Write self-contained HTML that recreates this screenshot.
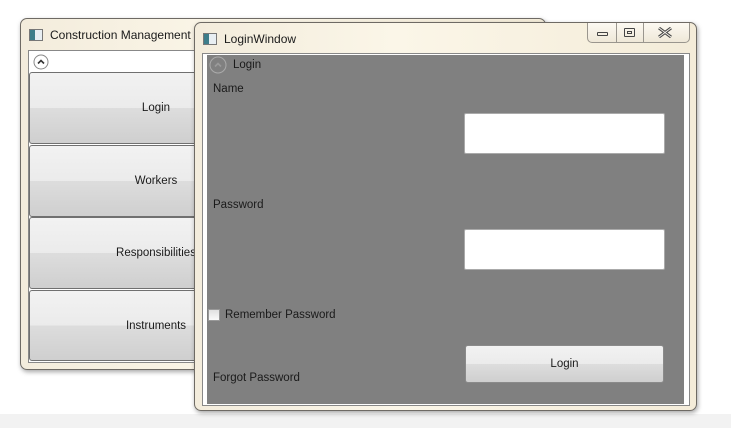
<!DOCTYPE html>
<html><head><style>
*{margin:0;padding:0;box-sizing:border-box}
body{width:731px;height:428px;overflow:hidden;background:#fff;position:relative;font-family:"Liberation Sans",sans-serif;font-size:11.5px;color:#1a1a1a}
.abs{position:absolute}
.win{position:absolute;border:1px solid #6e6a64;border-radius:7px;background:linear-gradient(90deg,#f3ecdc,#fbf6e8 40%,#f4ecd9);box-shadow:1px 2px 5px rgba(0,0,0,.35)}
.btn{position:absolute;border:1px solid #707070;border-radius:3px;background:linear-gradient(#f2f2f2 0,#ebebeb 50%,#dddddd 50%,#cfcfcf 100%);text-align:center}
.icon{position:absolute;width:14px;height:12px;border:1px solid #777;background:linear-gradient(90deg,#3d7d8a 0 5px,#e8eef2 5px)}
.txt{position:absolute;white-space:nowrap}
</style></head><body>
<div class="abs" style="left:0;top:414px;width:731px;height:14px;background:#f2f2f2"></div>

<!-- back window -->
<div class="win" style="left:20px;top:18px;width:526px;height:352px">
  <div class="icon" style="left:8px;top:10px"></div>
  <div class="txt" style="left:29px;top:9px;font-size:12px">Construction Management</div>
  <div class="abs" style="left:7px;top:31px;width:510px;height:313px;background:#fff;border:1px solid #888"></div>
  <svg class="abs" style="left:12px;top:35px" width="16" height="16"><circle cx="8" cy="8" r="7" fill="#fff" stroke="#888"/><path d="M5 9.5 L8 6.5 L11 9.5" fill="none" stroke="#333" stroke-width="1.6"/></svg>
  <div class="btn" style="left:8px;top:53px;width:254px;height:72px;line-height:70px">Login</div>
  <div class="btn" style="left:8px;top:126px;width:254px;height:72px;line-height:70px">Workers</div>
  <div class="btn" style="left:8px;top:198px;width:254px;height:72px;line-height:70px">Responsibilities</div>
  <div class="btn" style="left:8px;top:271px;width:254px;height:71px;line-height:70px">Instruments</div>
</div>

<!-- front window -->
<div class="win" style="left:194px;top:22px;width:503px;height:389px">
  <div class="icon" style="left:8px;top:10px"></div>
  <div class="txt" style="left:29px;top:9px;font-size:12px">LoginWindow</div>
  <div class="abs" style="left:392px;top:0;width:103px;height:20px;border:1px solid #9a968e;border-top:none;border-radius:0 0 5px 5px;background:linear-gradient(#fcf9f2,#efe8d8)">
    <div class="abs" style="left:28px;top:0;width:1px;height:19px;background:#9a968e"></div>
    <div class="abs" style="left:55px;top:0;width:1px;height:19px;background:#9a968e"></div>
    <div class="abs" style="left:9px;top:9px;width:11px;height:4px;border:1px solid #444;border-radius:1px"></div>
    <div class="abs" style="left:36px;top:5px;width:11px;height:9px;border:1px solid #444;border-radius:1px"><div class="abs" style="left:2px;top:2px;width:5px;height:3px;border:1px solid #444"></div></div>
    <svg class="abs" style="left:70px;top:4px" width="14" height="11"><path d="M1 1 L13 10 M13 1 L1 10" stroke="#444" stroke-width="3"/><path d="M1 1 L13 10 M13 1 L1 10" stroke="#f2efe8" stroke-width="1"/></svg>
  </div>
  <div class="abs" style="left:7px;top:30px;width:488px;height:353px;background:#fff;border:1px solid #888"></div>
  <div class="abs" style="left:12px;top:32px;width:477px;height:349px;background:#808080"></div>
  <svg class="abs" style="left:14px;top:33px" width="18" height="18"><circle cx="9" cy="9" r="8" fill="#808080" stroke="#aaa"/><path d="M6 10.5 L9 7.5 L12 10.5" fill="none" stroke="#9a9a9a" stroke-width="1.6"/></svg>
  <div class="txt" style="left:38px;top:36px">Login</div>
  <div class="txt" style="left:18px;top:60px">Name</div>
  <div class="abs" style="left:269px;top:90px;width:201px;height:41px;background:#fff;border:1px solid #aaa;border-radius:2px"></div>
  <div class="txt" style="left:18px;top:176px">Password</div>
  <div class="abs" style="left:269px;top:206px;width:201px;height:41px;background:#fff;border:1px solid #aaa;border-radius:2px"></div>
  <div class="abs" style="left:13px;top:286px;width:12px;height:12px;border:1px solid #999;background:linear-gradient(#e0e0e0,#fafafa)"></div>
  <div class="txt" style="left:30px;top:286px">Remember Password</div>
  <div class="btn" style="left:270px;top:322px;width:199px;height:38px;line-height:37px;border-color:#8a8a8a">Login</div>
  <div class="txt" style="left:18px;top:349px">Forgot Password</div>
</div>
</body></html>
